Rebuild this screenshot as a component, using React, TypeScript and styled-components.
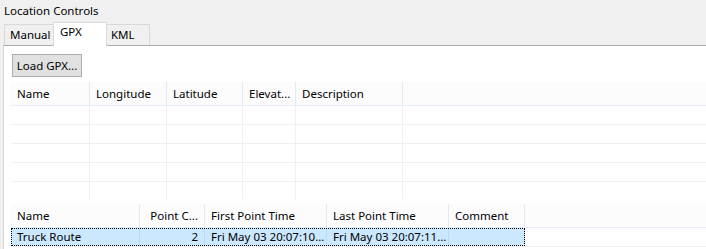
import styled, { createGlobalStyle } from 'styled-components';

const GlobalStyle = createGlobalStyle`
  html, body {
    margin: 0;
    padding: 0;
    background: #f0f0f0;
    overflow: hidden;
  }
  body {
    font-family: 'Noto Sans', 'Open Sans', sans-serif;
    font-size: 11.5px;
    color: #000;
  }
`;

const Window = styled.div`
  width: 706px;
  height: 249px;
  display: flex;
  flex-direction: column;
`;

const Title = styled.div`
  height: 22px;
  line-height: 22px;
  padding-left: 4px;
`;

const TabStrip = styled.div`
  height: 23px;
  display: flex;
  align-items: flex-end;
  padding-left: 4px;
`;

const Tab = styled.div<{ $w: number; $pad: number; $active?: boolean }>`
  box-sizing: border-box;
  width: ${(p) => p.$w}px;
  height: ${(p) => (p.$active ? 24 : 21)}px;
  margin-left: ${(p) => (p.$w === 50 ? 0 : -1)}px;
  margin-bottom: ${(p) => (p.$active ? -1 : 0)}px;
  padding-left: ${(p) => p.$pad}px;
  line-height: ${(p) => (p.$active ? 18 : 20)}px;
  border: 1px solid #d9d9d9;
  border-bottom: none;
  background: ${(p) => (p.$active ? '#fff' : '#f0f0f0')};
  position: relative;
  z-index: ${(p) => (p.$active ? 1 : 0)};
`;

const Panel = styled.div`
  flex: 1;
  margin-left: 3px;
  background: #fff;
  border-top: 1px solid #adadad;
  border-left: 1px solid #d9d9d9;
  padding: 8px 0 0 7px;
  display: flex;
  flex-direction: column;
`;

const Button = styled.div`
  box-sizing: border-box;
  width: 70px;
  height: 23px;
  margin-left: 1px;
  line-height: 21px;
  text-align: center;
  background: #e1e1e1;
  border: 1px solid #adadad;
`;

const Table = styled.div<{ $h: number }>`
  margin-top: 5px;
  height: ${(p) => p.$h}px;
  overflow: hidden;
  flex-shrink: 0;
`;

const HeaderRow = styled.div`
  display: flex;
  height: 24px;
  background: #fcfcfc;
  border-bottom: 1px solid #e5edf7;
  box-sizing: border-box;
`;

const HeadCell = styled.div<{ $w: number; $right?: boolean }>`
  box-sizing: border-box;
  width: ${(p) => p.$w}px;
  flex-shrink: 0;
  line-height: 23px;
  padding: 0 6px;
  border-right: 1px solid #e3e9f1;
  text-align: ${(p) => (p.$right ? 'right' : 'left')};
  white-space: nowrap;
  overflow: hidden;
`;

const Row = styled.div`
  display: flex;
  height: 19px;
  box-sizing: border-box;
  border-bottom: 1px solid #f0f0f0;
`;

const Band = styled.div<{ $selected?: boolean }>`
  display: flex;
  background: ${(p) => (p.$selected ? '#cce8ff' : 'transparent')};
  outline: ${(p) => (p.$selected ? '1px dotted #000' : 'none')};
  outline-offset: -1px;
`;

const Cell = styled.div<{ $w: number; $right?: boolean; $selected?: boolean }>`
  box-sizing: border-box;
  width: ${(p) => p.$w}px;
  flex-shrink: 0;
  line-height: 18px;
  padding: 0 6px;
  border-right: 1px solid ${(p) => (p.$selected ? '#b8dcf8' : '#f0f0f0')};
  text-align: ${(p) => (p.$right ? 'right' : 'left')};
  white-space: nowrap;
  overflow: hidden;
`;

const Filler = styled.div`
  flex: 1;
`;

type Col = { label: string; w: number; right?: boolean };

const pointCols: Col[] = [
  { label: 'Name', w: 79 },
  { label: 'Longitude', w: 77 },
  { label: 'Latitude', w: 76 },
  { label: 'Elevat...', w: 53 },
  { label: 'Description', w: 107 },
];

const trackCols: Col[] = [
  { label: 'Name', w: 129 },
  { label: 'Point C...', w: 65, right: true },
  { label: 'First Point Time', w: 122 },
  { label: 'Last Point Time', w: 122 },
  { label: 'Comment', w: 76 },
];

const tracks = [
  ['Truck Route', '2', 'Fri May 03 20:07:10...', 'Fri May 03 20:07:11...', ''],
];

const Header = ({ cols }: { cols: Col[] }) => (
  <HeaderRow>
    {cols.map((c) => (
      <HeadCell key={c.label} $w={c.w} $right={c.right}>
        {c.label}
      </HeadCell>
    ))}
    <Filler />
  </HeaderRow>
);

const App = () => {
  return (
    <Window>
      <GlobalStyle />
      <Title>Location Controls</Title>
      <TabStrip>
        <Tab $w={50} $pad={5}>Manual</Tab>
        <Tab $w={54} $pad={6} $active>
          GPX
        </Tab>
        <Tab $w={44} $pad={4}>KML</Tab>
      </TabStrip>
      <Panel>
        <Button>Load GPX...</Button>
        <Table $h={117}>
          <Header cols={pointCols} />
          {[0, 1, 2, 3, 4].map((i) => (
            <Row key={i}>
              <Band>
                {pointCols.map((c) => (
                  <Cell key={c.label} $w={c.w} />
                ))}
              </Band>
              <Filler />
            </Row>
          ))}
        </Table>
        <Table $h={43}>
          <Header cols={trackCols} />
          {tracks.map((t) => (
            <Row key={t[0]}>
              <Band $selected>
                {trackCols.map((c, j) => (
                  <Cell key={c.label} $w={c.w} $right={c.right} $selected>
                    {t[j]}
                  </Cell>
                ))}
              </Band>
              <Filler />
            </Row>
          ))}
        </Table>
      </Panel>
    </Window>
  );
};

export default App;
